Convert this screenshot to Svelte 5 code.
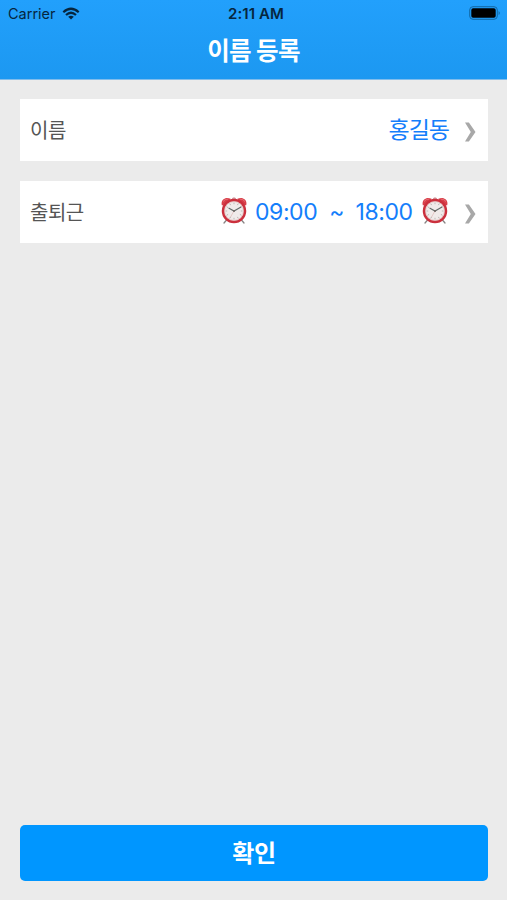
<script>
  const hours = { start: '09:00', end: '18:00' };
  const ticks = Array.from({ length: 12 }, (_, i) => i * 30);
</script>

{#snippet clock()}
  <svg class="clock" viewBox="0 0 26 27" width="26" height="27" aria-hidden="true">
    <path d="M6 22.5 3 26M20 22.5 23 26" stroke="#888484" stroke-width="1.3" stroke-linecap="round" />
    <path d="M11.8 3.2V1.1h2.4v2.1" fill="none" stroke="#bd777c" stroke-width="1" />
    <path d="M.8 8.3C-.5 3 4.2-.6 9.6 1.8L9 4 3.5 8.4Z" fill="#d83e49" />
    <path d="M25.2 8.3C26.5 3 21.8-.6 16.4 1.8L17 4l5.5 4.4Z" fill="#d83e49" />
    <path d="M2 4.6Q4 1.8 7 2.1M24 4.6Q22 1.8 19 2.1" fill="none" stroke="#e9787d" stroke-width=".8" />
    <circle cx="13" cy="14" r="11" fill="#f0ebea" stroke="#cb303d" stroke-width="2.5" />
    <circle cx="13" cy="14" r="9.5" fill="none" stroke="#dfaaa9" stroke-width=".6" />
    {#each ticks as angle}
      <path d="M13 5.5v1.7" stroke="#aaa3a1" stroke-width=".7" transform="rotate({angle} 13 14)" />
    {/each}
    <path d="M8 11.2 13 14l7-4" fill="none" stroke="#626b69" stroke-width="1.1" stroke-linecap="round" />
    <path d="m13 14-3.5 6" stroke="#d8a5a2" stroke-width=".5" />
    <circle cx="13" cy="14" r="1" fill="#6f6662" />
  </svg>
{/snippet}

{#snippet chevron()}
  <svg class="chevron" viewBox="0 0 12 20" width="12" height="20" aria-hidden="true">
    <path d="M1 .5h3.9L11.5 10 4.9 19.5H1L6.8 10Z" fill="#a8a8a8" />
  </svg>
{/snippet}

<div class="screen">
  <header>
    <div class="status">
      <div class="carrier">
        <span>Carrier</span>
        <svg viewBox="0 0 18 13" width="18" height="13" aria-hidden="true">
          <path d="M1.3 5.2Q9-1.7 16.7 5.2M4 8Q9 3.5 14 8" fill="none" stroke="#06263e" stroke-width="2.2" />
          <path d="M6.2 9.7Q9 7.7 11.8 9.7L9 12.5Z" fill="#06263e" />
        </svg>
      </div>
      <time>2:11 AM</time>
      <svg class="battery" viewBox="0 0 32 14" width="32" height="14" aria-hidden="true">
        <rect x=".7" y=".7" width="27.6" height="12.6" rx="3.3" fill="none" stroke="#1268a4" stroke-width="1" />
        <rect x="2.3" y="2.3" width="24.4" height="9.4" rx="1.8" fill="#000" />
        <path d="M29.6 4.9Q32 7 29.6 9.1Z" fill="#1268a4" />
      </svg>
    </div>
    <h1>이름 등록</h1>
  </header>

  <main>
    <div class="row">
      <span class="label">이름</span>
      <span class="name">홍길동</span>
      {@render chevron()}
    </div>
    <div class="row">
      <span class="label">출퇴근</span>
      <div class="hours">
        {@render clock()}
        <span class="start">{hours.start}</span>
        <span class="tilde">~</span>
        <span class="end">{hours.end}</span>
        {@render clock()}
      </div>
      {@render chevron()}
    </div>
  </main>

  <footer><button>확인</button></footer>
</div>

<style>
  :global(body) { margin: 0; }
  .screen {
    display: flex;
    flex-direction: column;
    box-sizing: border-box;
    width: 507px;
    height: 900px;
    overflow: hidden;
    background: #ebebeb;
    font-family: Inter, "Noto Sans CJK KR", sans-serif;
  }
  header {
    box-sizing: border-box;
    height: 80px;
    background: linear-gradient(#22a0fc, #1c98f1);
    border-bottom: 1px solid #81bdec;
  }
  .status {
    display: grid;
    grid-template-columns: 1fr auto 1fr;
    align-items: center;
    height: 27px;
    padding: 0 6px 0 8px;
    color: #06263e;
    font-size: 14.5px;
  }
  .carrier { display: flex; align-items: center; gap: 6px; }
  time { margin-left: 3px; font-size: 15px; font-weight: 600; letter-spacing: .1px; }
  .battery { justify-self: end; margin-bottom: 1px; }
  h1 {
    margin: 0;
    height: 49px;
    line-height: 49px;
    text-align: center;
    color: #fff;
    font-size: 24.5px;
    font-weight: 700;
    letter-spacing: -.7px;
  }
  main {
    display: flex;
    flex: 1;
    flex-direction: column;
    gap: 20px;
    padding: 19px 19px 0 20px;
  }
  .row {
    display: flex;
    align-items: center;
    box-sizing: border-box;
    height: 62px;
    padding: 0 12px 0 10px;
    background: #fff;
  }
  .label { margin: 0 auto 2px 0; color: #555; font-size: 20px; letter-spacing: -.5px; }
  .name { margin-bottom: 4px; color: #147efb; font-size: 23px; letter-spacing: -1px; }
  .chevron { flex: none; margin: 3px 0 0 15px; }
  .hours {
    display: flex;
    align-items: center;
    margin-right: 1.5px;
    color: #147efb;
    font-size: 23px;
    letter-spacing: -.45px;
  }
  .clock { flex: none; margin-bottom: 3px; }
  .start { margin-left: 8px; }
  .tilde { margin: 0 11.5px 0 12px; }
  .end { margin-right: 9px; }
  footer { padding: 0 19px 19px 20px; }
  button {
    display: block;
    width: 100%;
    height: 56px;
    padding: 0 0 3px;
    border: 0;
    border-radius: 5px;
    background: #0096ff;
    color: #fff;
    font: 700 24px "Noto Sans CJK KR", sans-serif;
    letter-spacing: -.4px;
  }
</style>
